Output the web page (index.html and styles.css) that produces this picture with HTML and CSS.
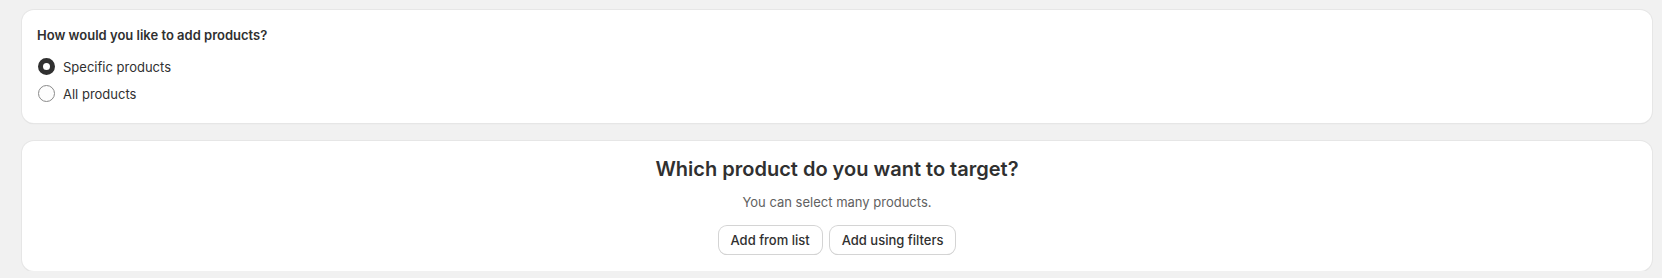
FILE: index.html
```html
<!DOCTYPE html>
<html lang="en">
<head>
    <meta charset="UTF-8">
    <meta name="viewport" content="width=device-width, initial-scale=1.0">
    <title>Add products</title>
    <link rel="stylesheet" href="styles.css">
</head>
<body>
    <div class="page">
        <!-- How to add products -->
        <div class="card">
            <div class="card-title">How would you like to add products?</div>
            <label class="radio-row">
                <input type="radio" name="mode" checked>
                <span class="radio-dot"></span>
                <span>Specific products</span>
            </label>
            <label class="radio-row">
                <input type="radio" name="mode">
                <span class="radio-dot"></span>
                <span>All products</span>
            </label>
        </div>

        <!-- Empty state -->
        <div class="card empty">
            <h2>Which product do you want to target?</h2>
            <p>You can select many products.</p>
            <div class="actions">
                <button class="button">Add from list</button>
                <button class="button">Add using filters</button>
            </div>
        </div>
    </div>
</body>
</html>
```

FILE: styles.css
```css
body {
    font-family: Inter, "Noto Sans", sans-serif;
    background-color: #f1f1f1;
    color: #303030;
    margin: 0;
    font-size: 13px;
    line-height: 20px;
}
.page {
    padding: 10px 10px 0 22px;
    display: flex;
    flex-direction: column;
    gap: 18px;
}
.card {
    background-color: #fff;
    border-radius: 12px;
    box-shadow: 0 0 0 1px #e6e6e6, 0 1px 1px 0 rgba(26, 26, 26, 0.12);
    padding: 15px 15px 16px;
}
.card-title {
    font-weight: 600;
    margin-bottom: 8px;
}
.radio-row {
    display: flex;
    align-items: center;
    gap: 8px;
    height: 27px;
    padding-left: 1px;
    cursor: pointer;
}
.radio-row input {
    display: none;
}
.radio-dot {
    box-sizing: border-box;
    width: 17px;
    height: 17px;
    border-radius: 50%;
    border: 1px solid #8a8a8a;
    background: #fdfdfd;
}
.radio-row input:checked + .radio-dot {
    border: 5px solid #303030;
    background: #fff;
}
.empty {
    text-align: center;
    padding: 16px 15px 17px;
}
.empty h2 {
    font-size: 20px;
    line-height: 24px;
    font-weight: 600;
    margin: 0 0 11px;
}
.empty p {
    color: #616161;
    margin: 0 0 14px;
}
.actions {
    display: flex;
    justify-content: center;
    gap: 8px;
}
.button {
    font-family: inherit;
    font-size: 13px;
    font-weight: 550;
    line-height: 16px;
    color: #303030;
    background: #fff;
    border: none;
    border-radius: 8px;
    padding: 6px 12px;
    min-height: 28px;
    box-shadow: 0 0 0 1px #d4d4d4, 0 1px 0 0 #c4c4c4;
    cursor: pointer;
}
.button:hover {
    background: #f7f7f7;
}
```
